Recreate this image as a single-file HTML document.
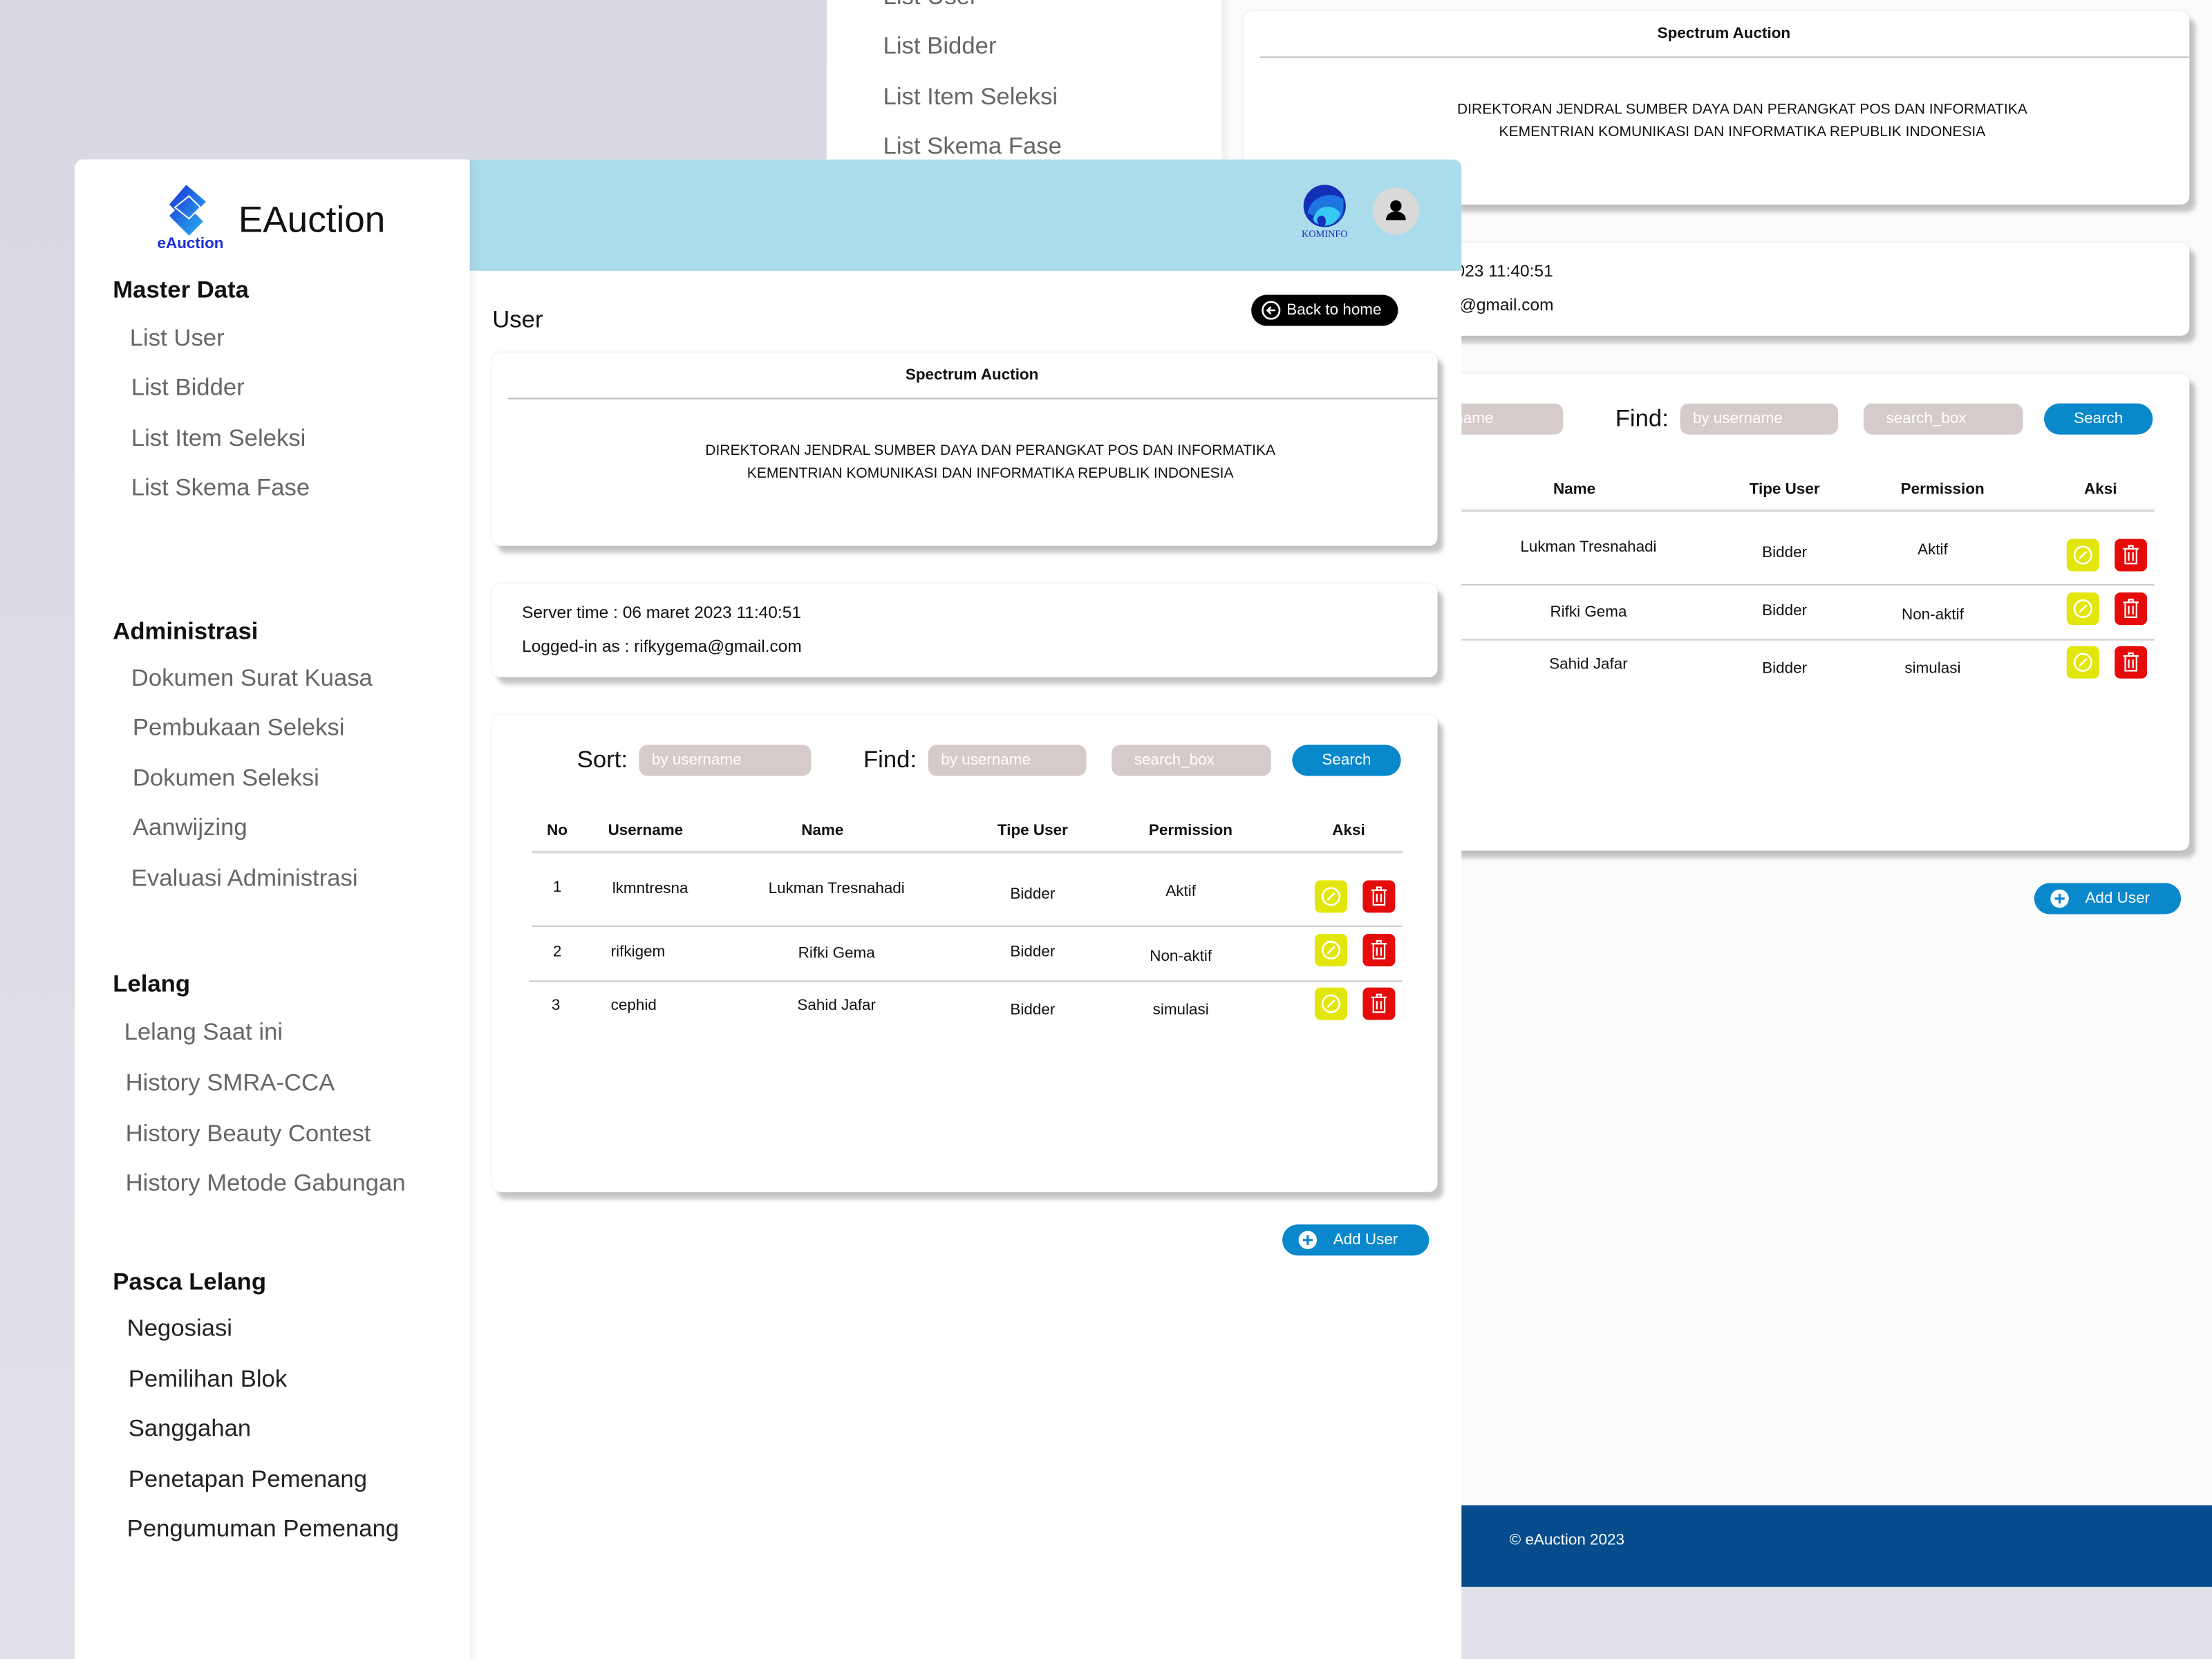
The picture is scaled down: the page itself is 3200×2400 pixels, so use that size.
<!DOCTYPE html>
<html><head><meta charset="utf-8">
<style>
*{margin:0;padding:0;box-sizing:border-box}
html,body{width:3200px;height:2400px;overflow:hidden;background:#dcdce6}
#s{position:absolute;left:0;top:0;width:1568px;height:1176px;transform:scale(2.040816);transform-origin:0 0;background:linear-gradient(180deg,#d8d8e3,#e1e1ea);font-family:"Liberation Sans",sans-serif;overflow:hidden}
.win{position:absolute;width:983px;height:1254px;background:#fff;overflow:hidden}
.a{position:absolute;white-space:nowrap}
.side{position:absolute;left:0;top:0;width:280px;height:100%;background:#fff;box-shadow:3px 0 6px rgba(0,0,0,.06);z-index:2}
.h{font-weight:bold;font-size:17px;color:#111;transform:translateY(-50%)}
.it{font-size:17px;color:#666;transform:translateY(-50%)}
.it2{font-size:17px;color:#222;transform:translateY(-50%)}
.hdr{position:absolute;left:280px;top:0;width:703px;height:79px;background:#abdcec}
.card{position:absolute;left:296px;width:670px;background:#fff;border-radius:6px;box-shadow:4px 5px 3px rgba(0,0,0,.22),0 0 3px rgba(0,0,0,.08)}
.c{transform:translate(-50%,-50%);font-size:11px;color:#111}
.d{font-size:10.3px}
.l{transform:translateY(-50%);font-size:11px;color:#111}
.b{font-weight:bold}
.inp{position:absolute;height:22px;background:#d6cbcb;border-radius:6px;color:#fff;font-size:11px;line-height:22px;padding-left:9px}
.btnb{position:absolute;background:#0a88cc;border-radius:11px;color:#fff;font-size:11px;text-align:center}
.ye,.re{position:absolute;width:23px;height:23px;border-radius:4px}
.ye{background:#e3e60a}.re{background:#e50b0b}
.ye svg,.re svg{position:absolute;left:0;top:0}
.ln{position:absolute;height:1px;background:#c8c8c8}
</style></head><body><div id="s">

<!-- back window -->
<div class="win" style="left:586px;top:-129px;z-index:1">
 <div class="side">
  <div class="a h" style="left:27px;top:93px">Master Data</div>
  <div class="a it" style="left:40px;top:127px">List User</div>
  <div class="a it" style="left:40px;top:162px">List Bidder</div>
  <div class="a it" style="left:40px;top:198px">List Item Seleksi</div>
  <div class="a it" style="left:40px;top:233px">List Skema Fase</div>
 </div>
 <div style="position:absolute;left:280px;top:0;width:703px;height:100%;background:#fbfbfc"></div>
 <div class="card" style="top:137px;height:137px">
  <div class="a c b" style="left:340px;top:16px">Spectrum Auction</div>
  <div class="ln" style="left:11px;top:32px;width:659px;background:#bbb"></div>
  <div class="a c d" style="left:353px;top:70px">DIREKTORAN JENDRAL SUMBER DAYA DAN PERANGKAT POS DAN INFORMATIKA</div>
  <div class="a c d" style="left:353px;top:86px">KEMENTRIAN KOMUNIKASI DAN INFORMATIKA REPUBLIK INDONESIA</div>
 </div>
 <div class="card" style="top:301px;height:66px">
  <div class="a l" style="left:21px;top:20px;font-size:12px">Server time : 06 maret 2023 11:40:51</div>
  <div class="a l" style="left:21px;top:44px;font-size:12px">Logged-in as : rifkygema@gmail.com</div>
 </div>
 <div class="card" style="top:394px;height:338px">
  <div class="inp" style="left:104px;top:21px;width:122px">by username</div>
  <div class="a l" style="left:263px;top:32px;font-size:17px">Find:</div>
  <div class="inp" style="left:309px;top:21px;width:112px">by username</div>
  <div class="inp" style="left:439px;top:21px;width:113px;padding-left:16px">search_box</div>
  <div class="btnb" style="left:567px;top:21px;width:77px;height:22px;line-height:22px">Search</div>
  <div class="a c b" style="left:234px;top:82px">Name</div>
  <div class="a c b" style="left:383px;top:82px">Tipe User</div>
  <div class="a c b" style="left:495px;top:82px">Permission</div>
  <div class="a c b" style="left:607px;top:82px">Aksi</div>
  <div class="ln" style="left:28px;top:96px;width:617px;background:#ddd;height:2px"></div>
  <div class="a c" style="left:244px;top:123px">Lukman Tresnahadi</div><div class="a c" style="left:383px;top:127px">Bidder</div><div class="a c" style="left:488px;top:125px">Aktif</div>
  <div class="ln" style="left:28px;top:149px;width:617px"></div>
  <div class="a c" style="left:244px;top:169px">Rifki Gema</div><div class="a c" style="left:383px;top:168px">Bidder</div><div class="a c" style="left:488px;top:171px">Non-aktif</div>
  <div class="ln" style="left:28px;top:188px;width:617px"></div>
  <div class="a c" style="left:244px;top:206px">Sahid Jafar</div><div class="a c" style="left:383px;top:209px">Bidder</div><div class="a c" style="left:488px;top:209px">simulasi</div>
  <div class="ye" style="left:583px;top:117px"><svg width="23" height="23"><circle cx="11.5" cy="11.5" r="6" fill="none" stroke="#fff" stroke-width="1.3"/><path d="M9 14L14 9" stroke="#fff" stroke-width="1.3"/></svg></div>
  <div class="re" style="left:617px;top:117px"><svg width="23" height="23" fill="none" stroke="#fff" stroke-width="1.1"><path d="M6 7h11M10 7V5h3v2M7.5 7.5v10h8v-10M10 9.5v6M13 9.5v6"/></svg></div>
  <div class="ye" style="left:583px;top:155px"><svg width="23" height="23"><circle cx="11.5" cy="11.5" r="6" fill="none" stroke="#fff" stroke-width="1.3"/><path d="M9 14L14 9" stroke="#fff" stroke-width="1.3"/></svg></div>
  <div class="re" style="left:617px;top:155px"><svg width="23" height="23" fill="none" stroke="#fff" stroke-width="1.1"><path d="M6 7h11M10 7V5h3v2M7.5 7.5v10h8v-10M10 9.5v6M13 9.5v6"/></svg></div>
  <div class="ye" style="left:583px;top:193px"><svg width="23" height="23"><circle cx="11.5" cy="11.5" r="6" fill="none" stroke="#fff" stroke-width="1.3"/><path d="M9 14L14 9" stroke="#fff" stroke-width="1.3"/></svg></div>
  <div class="re" style="left:617px;top:193px"><svg width="23" height="23" fill="none" stroke="#fff" stroke-width="1.1"><path d="M6 7h11M10 7V5h3v2M7.5 7.5v10h8v-10M10 9.5v6M13 9.5v6"/></svg></div>
 </div>
 <div class="btnb" style="left:856px;top:755px;width:104px;height:22px;line-height:22px;padding-left:14px">Add User
  <svg width="14" height="14" style="position:absolute;left:11px;top:4px"><circle cx="7" cy="7" r="6.5" fill="#fff"/><path d="M7 3.5v7M3.5 7h7" stroke="#0a88cc" stroke-width="1.6"/></svg></div>
 <div style="position:absolute;left:280px;top:1196px;width:703px;height:58px;background:#074d8e"></div>
 <div class="a" style="left:484px;top:1221px;transform:translateY(-50%);color:#fff;font-size:11px">© eAuction 2023</div>
</div>

<!-- main window -->
<div class="win" style="left:53px;top:113px;z-index:3;border-top-left-radius:6px;border-top-right-radius:6px">
 <div class="side">
  <svg class="a" style="left:57px;top:16px" width="50" height="50" viewBox="0 0 50 50">
   <defs><linearGradient id="g" x1="0" y1="0" x2="1" y2="1"><stop offset="0" stop-color="#1a2fd8"/><stop offset="1" stop-color="#2bb8f0"/></linearGradient></defs>
   <path d="M22 2L36 14L28 22L34 28L24 38L10 24L14 20L10 16Z" fill="url(#g)"/>
   <path d="M14 18L24 10L32 18L24 26Z" fill="none" stroke="#fff" stroke-width="1"/>
   <text x="25" y="47" text-anchor="middle" font-family="Liberation Sans" font-weight="bold" font-size="11" fill="#1a2fd8">eAuction</text>
  </svg>
  <div class="a" style="left:116px;top:43px;transform:translateY(-50%);font-size:26px;color:#111">EAuction</div>
  <div class="a h" style="left:27px;top:93px">Master Data</div>
  <div class="a it" style="left:39px;top:127px">List User</div>
  <div class="a it" style="left:40px;top:162px">List Bidder</div>
  <div class="a it" style="left:40px;top:198px">List Item Seleksi</div>
  <div class="a it" style="left:40px;top:233px">List Skema Fase</div>
  <div class="a h" style="left:27px;top:335px">Administrasi</div>
  <div class="a it" style="left:40px;top:368px">Dokumen Surat Kuasa</div>
  <div class="a it" style="left:41px;top:403px">Pembukaan Seleksi</div>
  <div class="a it" style="left:41px;top:439px">Dokumen Seleksi</div>
  <div class="a it" style="left:41px;top:474px">Aanwijzing</div>
  <div class="a it" style="left:40px;top:510px">Evaluasi Administrasi</div>
  <div class="a h" style="left:27px;top:585px">Lelang</div>
  <div class="a it" style="left:35px;top:619px">Lelang Saat ini</div>
  <div class="a it" style="left:36px;top:655px">History SMRA-CCA</div>
  <div class="a it" style="left:36px;top:691px">History Beauty Contest</div>
  <div class="a it" style="left:36px;top:726px">History Metode Gabungan</div>
  <div class="a h" style="left:27px;top:796px">Pasca Lelang</div>
  <div class="a it2" style="left:37px;top:829px">Negosiasi</div>
  <div class="a it2" style="left:38px;top:865px">Pemilihan Blok</div>
  <div class="a it2" style="left:38px;top:900px">Sanggahan</div>
  <div class="a it2" style="left:38px;top:936px">Penetapan Pemenang</div>
  <div class="a it2" style="left:37px;top:971px">Pengumuman Pemenang</div>
 </div>
 <div class="hdr">
  <svg class="a" style="left:586px;top:16px" width="40" height="40" viewBox="0 0 40 40">
   <circle cx="20" cy="17" r="15" fill="#1530b8"/>
   <path d="M8 22C10 10 24 6 33 12C34 18 33 24 30 27C26 18 16 16 12 24Z" fill="#1e74e0"/>
   <path d="M12 26C14 16 26 15 31 22C30 27 26 31 20 31C22 27 20 23 17 24C14 25 14 28 16 30C13 29 12 28 12 26Z" fill="#38c8f4"/>
   <text x="20" y="39" text-anchor="middle" font-family="Liberation Serif" font-size="7" fill="#1530b8">KOMINFO</text>
  </svg>
  <div style="position:absolute;left:640px;top:20px;width:33px;height:33px;border-radius:50%;background:#d9d9d9">
   <svg width="33" height="33"><circle cx="16.5" cy="13" r="4" fill="#000"/><path d="M9.5 23c0-4 3-6 7-6s7 2 7 6z" fill="#000"/></svg>
  </div>
 </div>
 <div class="a" style="left:296px;top:114px;transform:translateY(-50%);font-size:17px;color:#111">User</div>
 <div style="position:absolute;left:834px;top:96px;width:104px;height:22px;background:#000;border-radius:11px;color:#fff;font-size:11px;line-height:22px;padding-left:25px">Back to home
  <svg width="14" height="14" style="position:absolute;left:7px;top:4px"><circle cx="7" cy="7" r="6" fill="none" stroke="#fff" stroke-width="1.3"/><path d="M10 7H4.5M6.8 4.6L4.4 7l2.4 2.4" fill="none" stroke="#fff" stroke-width="1.3"/></svg></div>
 <div class="card" style="top:137px;height:137px">
  <div class="a c b" style="left:340px;top:16px">Spectrum Auction</div>
  <div class="ln" style="left:11px;top:32px;width:659px;background:#bbb"></div>
  <div class="a c d" style="left:353px;top:70px">DIREKTORAN JENDRAL SUMBER DAYA DAN PERANGKAT POS DAN INFORMATIKA</div>
  <div class="a c d" style="left:353px;top:86px">KEMENTRIAN KOMUNIKASI DAN INFORMATIKA REPUBLIK INDONESIA</div>
 </div>
 <div class="card" style="top:301px;height:66px">
  <div class="a l" style="left:21px;top:20px;font-size:12px">Server time : 06 maret 2023 11:40:51</div>
  <div class="a l" style="left:21px;top:44px;font-size:12px">Logged-in as : rifkygema@gmail.com</div>
 </div>
 <div class="card" style="top:394px;height:338px">
  <div class="a l" style="left:60px;top:32px;font-size:17px">Sort:</div>
  <div class="inp" style="left:104px;top:21px;width:122px">by username</div>
  <div class="a l" style="left:263px;top:32px;font-size:17px">Find:</div>
  <div class="inp" style="left:309px;top:21px;width:112px">by username</div>
  <div class="inp" style="left:439px;top:21px;width:113px;padding-left:16px">search_box</div>
  <div class="btnb" style="left:567px;top:21px;width:77px;height:22px;line-height:22px">Search</div>
  <div class="a c b" style="left:46px;top:82px">No</div>
  <div class="a l b" style="left:82px;top:82px">Username</div>
  <div class="a c b" style="left:234px;top:82px">Name</div>
  <div class="a c b" style="left:383px;top:82px">Tipe User</div>
  <div class="a c b" style="left:495px;top:82px">Permission</div>
  <div class="a c b" style="left:607px;top:82px">Aksi</div>
  <div class="ln" style="left:28px;top:96px;width:617px;background:#ddd;height:2px"></div>
  <div class="a c" style="left:46px;top:122px">1</div><div class="a l" style="left:85px;top:123px">lkmntresna</div>
  <div class="a c" style="left:244px;top:123px">Lukman Tresnahadi</div><div class="a c" style="left:383px;top:127px">Bidder</div><div class="a c" style="left:488px;top:125px">Aktif</div>
  <div class="ln" style="left:28px;top:149px;width:617px"></div>
  <div class="a c" style="left:46px;top:168px">2</div><div class="a l" style="left:84px;top:168px">rifkigem</div>
  <div class="a c" style="left:244px;top:169px">Rifki Gema</div><div class="a c" style="left:383px;top:168px">Bidder</div><div class="a c" style="left:488px;top:171px">Non-aktif</div>
  <div class="ln" style="left:26px;top:188px;width:619px"></div>
  <div class="a c" style="left:45px;top:206px">3</div><div class="a l" style="left:84px;top:206px">cephid</div>
  <div class="a c" style="left:244px;top:206px">Sahid Jafar</div><div class="a c" style="left:383px;top:209px">Bidder</div><div class="a c" style="left:488px;top:209px">simulasi</div>
  <div class="ye" style="left:583px;top:117px"><svg width="23" height="23"><circle cx="11.5" cy="11.5" r="6" fill="none" stroke="#fff" stroke-width="1.3"/><path d="M9 14L14 9" stroke="#fff" stroke-width="1.3"/></svg></div>
  <div class="re" style="left:617px;top:117px"><svg width="23" height="23" fill="none" stroke="#fff" stroke-width="1.1"><path d="M6 7h11M10 7V5h3v2M7.5 7.5v10h8v-10M10 9.5v6M13 9.5v6"/></svg></div>
  <div class="ye" style="left:583px;top:155px"><svg width="23" height="23"><circle cx="11.5" cy="11.5" r="6" fill="none" stroke="#fff" stroke-width="1.3"/><path d="M9 14L14 9" stroke="#fff" stroke-width="1.3"/></svg></div>
  <div class="re" style="left:617px;top:155px"><svg width="23" height="23" fill="none" stroke="#fff" stroke-width="1.1"><path d="M6 7h11M10 7V5h3v2M7.5 7.5v10h8v-10M10 9.5v6M13 9.5v6"/></svg></div>
  <div class="ye" style="left:583px;top:193px"><svg width="23" height="23"><circle cx="11.5" cy="11.5" r="6" fill="none" stroke="#fff" stroke-width="1.3"/><path d="M9 14L14 9" stroke="#fff" stroke-width="1.3"/></svg></div>
  <div class="re" style="left:617px;top:193px"><svg width="23" height="23" fill="none" stroke="#fff" stroke-width="1.1"><path d="M6 7h11M10 7V5h3v2M7.5 7.5v10h8v-10M10 9.5v6M13 9.5v6"/></svg></div>
 </div>
 <div class="btnb" style="left:856px;top:755px;width:104px;height:22px;line-height:22px;padding-left:14px">Add User
  <svg width="14" height="14" style="position:absolute;left:11px;top:4px"><circle cx="7" cy="7" r="6.5" fill="#fff"/><path d="M7 3.5v7M3.5 7h7" stroke="#0a88cc" stroke-width="1.6"/></svg></div>
</div>

</div></body></html>
